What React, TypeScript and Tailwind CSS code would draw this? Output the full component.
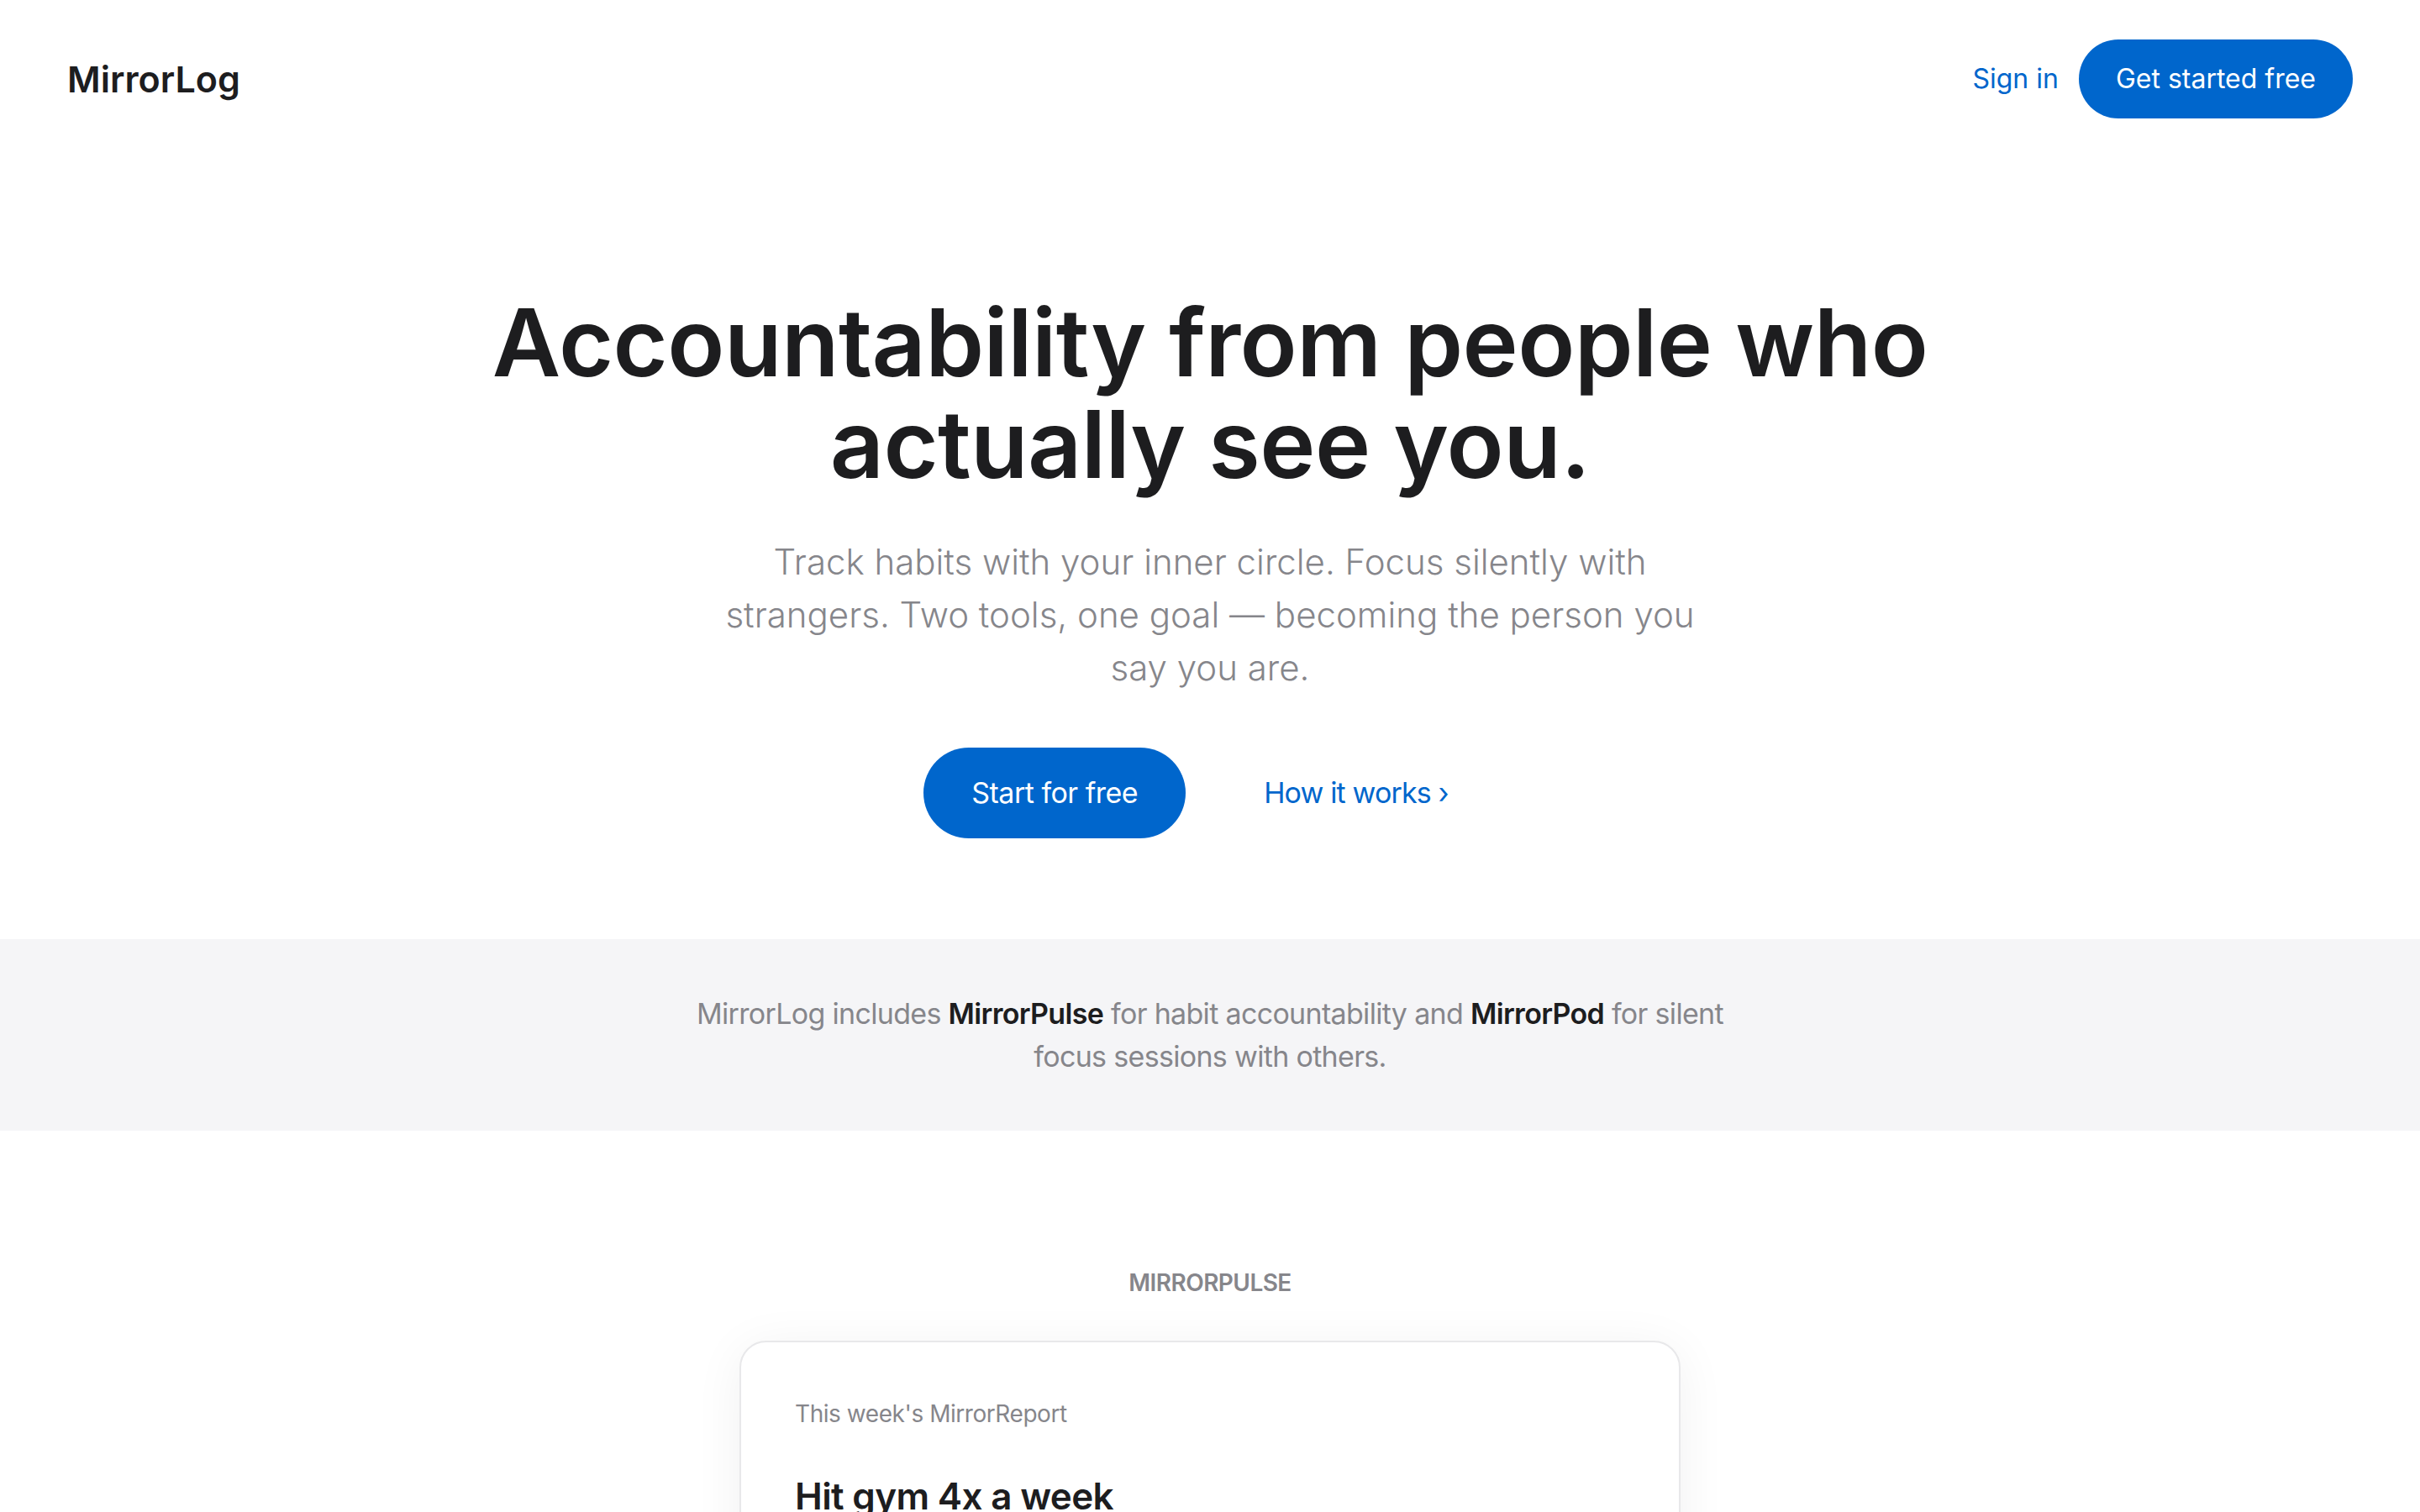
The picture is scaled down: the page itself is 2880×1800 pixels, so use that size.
import React from "react";

const font = { fontFamily: "Inter, 'Noto Sans', 'Liberation Sans', sans-serif" };

function Nav() {
  return (
    <header className="flex items-center justify-between px-[80px] py-[47px]">
      <a href="#" className="text-[43px] font-semibold leading-none text-[#1d1d1f]">
        MirrorLog
      </a>
      <nav className="flex items-center gap-[24px]">
        <a href="#" className="text-[32px] leading-[48px] text-[#0066cc]">
          Sign in
        </a>
        <a
          href="#"
          className="rounded-full bg-[#0066cc] px-[44px] py-[23px] text-[32px] leading-[48px] text-white"
        >
          Get started free
        </a>
      </nav>
    </header>
  );
}

function Hero() {
  return (
    <section className="flex flex-col items-center px-[80px] pt-[159px] pb-[120px] text-center">
      <h1 className="text-[112px] font-semibold leading-[121px] tracking-[-0.005em] text-[#1d1d1f]">
        Accountability from people who
        <br />
        actually see you.
      </h1>
      <p className="mt-[48px] max-w-[1190px] text-[42px] font-light leading-[63px] text-[#86868b]">
        Track habits with your inner circle. Focus silently with strangers. Two tools, one goal — becoming
        the person you say you are.
      </p>
      <div className="mt-[64px] flex items-center gap-[36px]">
        <a
          href="#"
          className="rounded-full bg-[#0066cc] px-[57px] py-[28px] text-[34px] leading-[52px] tracking-[-0.015em] text-white"
        >
          Start for free
        </a>
        <a
          href="#"
          className="rounded-full px-[57px] py-[28px] text-[34px] leading-[52px] tracking-[-0.025em] text-[#0066cc]"
        >
          How it works ›
        </a>
      </div>
    </section>
  );
}

function Band() {
  return (
    <section className="flex justify-center bg-[#f5f5f7] px-[80px] py-[63px]">
      <p className="max-w-[1260px] text-center text-[34px] leading-[51px] tracking-[-0.02em] text-[#86868b]">
        MirrorLog includes <strong className="font-semibold text-[#1d1d1f]">MirrorPulse</strong> for habit
        accountability and <strong className="font-semibold text-[#1d1d1f]">MirrorPod</strong> for silent
        focus sessions with others.
      </p>
    </section>
  );
}

function PulseSection() {
  const days = ["Mon", "Tue", "Wed", "Thu", "Fri", "Sat", "Sun"];
  const done = [true, false, true, true, false, false, false];
  return (
    <section className="flex flex-col items-center px-[80px] pt-[160px] pb-[160px]">
      <p className="text-[28px] font-semibold uppercase leading-[42px] tracking-[-0.02em] text-[#86868b]">
        MirrorPulse
      </p>
      <div className="mt-[48px] w-[1120px] rounded-[32px] border-2 border-[#e8e8ea] bg-white p-[64px] shadow-[0_8px_60px_rgba(0,0,0,0.06)]">
        <p className="text-[28px] leading-[42px] tracking-[-0.016em] text-[#86868b]">This week's MirrorReport</p>
        <h3 className="mt-[50px] text-[44px] font-semibold leading-[54px] tracking-[-0.015em] text-[#1d1d1f]">
          Hit gym 4x a week
        </h3>
        <div className="mt-[32px] flex gap-[16px]">
          {days.map((d, i) => (
            <div key={d} className="flex flex-1 flex-col items-center gap-[12px]">
              <div
                className={
                  done[i]
                    ? "h-[64px] w-full rounded-[16px] bg-[#0066cc]"
                    : "h-[64px] w-full rounded-[16px] bg-[#f5f5f7]"
                }
              />
              <span className="text-[24px] text-[#86868b]">{d}</span>
            </div>
          ))}
        </div>
      </div>
    </section>
  );
}

export default function App() {
  return (
    <div className="min-h-screen bg-white antialiased" style={font}>
      <Nav />
      <Hero />
      <Band />
      <PulseSection />
    </div>
  );
}
